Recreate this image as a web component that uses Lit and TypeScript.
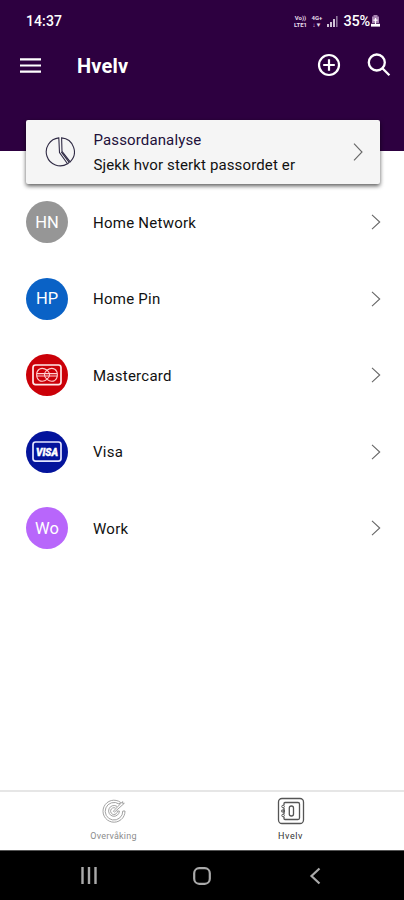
import { LitElement, html, css } from "lit";
import { customElement } from "lit/decorators.js";

const mastercard = html`<svg width="30" height="22" viewBox="0 0 30 22" fill="none" stroke="#fff">
  <rect x="1" y="1" width="28" height="19.6" rx="2.6" stroke-width="1.7" stroke="#ffe9e9"/>
  <g stroke-width="1.1" stroke="#ffd0d0">
    <path d="M15 6.2C12.5 4.3 9.5 4 7.2 5.2C3.8 7.5 3.8 14 7.2 16.4C9.5 17.6 12.5 17.3 15 15.4"/>
    <path d="M15 6.2C17.5 4.3 20.5 4 22.8 5.2C26.2 7.5 26.2 14 22.8 16.4C20.5 17.6 17.5 17.3 15 15.4"/>
    <path d="M15 6.2C11.6 9 11.6 12.6 15 15.4C18.4 12.6 18.4 9 15 6.2Z"/>
    <path d="M5 9.6H25 M5 12H25"/>
  </g>
</svg>`;

const visa = html`<svg width="30" height="22" viewBox="0 0 30 22" fill="none">
  <rect x="1" y="1" width="28" height="19.2" rx="2.6" stroke-width="1.7" stroke="#e4e6ff"/>
  <text class="visa" x="4" y="14.6" textLength="22" lengthAdjust="spacingAndGlyphs">VISA</text>
</svg>`;

const rows = [
  { name: "Home Network", color: "#969696", mark: "HN" },
  { name: "Home Pin", color: "#0a62c6", mark: "HP" },
  { name: "Mastercard", color: "#cb0008", mark: mastercard },
  { name: "Visa", color: "#04149c", mark: visa },
  { name: "Work", color: "#b866fb", mark: "Wo" },
];

@customElement("app-root")
export class AppRoot extends LitElement {
  static styles = css`
    :host { display: flex; flex-direction: column; width: 404px; height: 900px; background: #fff; font-family: Roboto, sans-serif; color: #111; overflow: hidden; }
    * { box-sizing: border-box; }
    svg { display: block; flex: none; }
    header { height: 151px; flex: none; background: #2d0040; color: #fff; }
    .status { height: 40px; display: flex; align-items: center; justify-content: space-between; padding: 1px 24px 0 26px; }
    .time { font-size: 14px; font-weight: 500; letter-spacing: .1px; }
    .indicators { display: flex; align-items: center; }
    .net { font-size: 6px; font-weight: 700; color: #e6dcea; display: flex; flex-direction: column; align-items: center; }
    .net span { line-height: 7px; white-space: nowrap; }
    .volte { width: 16px; }
    .data { width: 13px; margin-left: 2px; }
    .signal { margin: 1px 5px 0 4px; }
    .percent { font-size: 14.5px; line-height: 17px; font-weight: 500; letter-spacing: -0.2px; padding-top: 1px; }
    .battery { margin-left: 1px; }
    .toolbar { height: 50px; display: flex; align-items: center; padding: 0 13px 0 20px; }
    h1 { margin: 2px 0 0 36px; font-size: 20px; font-weight: 700; line-height: 24px; letter-spacing: 0.2px; flex: 1; }
    .search { margin-left: 26px; }
    .card { position: relative; flex: none; height: 64px; margin: -31px 24px 0 26px; padding: 0 17px 0 19px; display: flex; align-items: center; background: #f5f5f5; border-radius: 2px; box-shadow: 0 2px 4px rgba(0,0,0,.65); }
    .card-text { flex: 1; margin-left: 18.5px; padding-top: 1px; font-size: 15px; line-height: 25px; letter-spacing: .13px; }
    .card-title { color: #21103a; }
    .chev { color: #666; }
    .list { flex: 1; }
    .row { height: 76.5px; display: flex; align-items: center; padding: 0 23px 0 26px; }
    .avatar { width: 42px; height: 42px; border-radius: 50%; display: flex; align-items: center; justify-content: center; color: #fff; font-size: 16.5px; }
    .visa { font: italic 900 10.5px Roboto, sans-serif; fill: #fff; stroke: #fff; stroke-width: .4; }
    .name { flex: 1; margin-left: 25px; font-size: 15px; letter-spacing: .25px; padding-top: .5px; }
    .tabs { height: 60px; flex: none; display: flex; border-top: 2px solid #e6e6e6; padding: 0 25px; }
    .tab { flex: 1; display: flex; flex-direction: column; align-items: center; color: #333; font-size: 9px; padding-top: 5px; }
    .tab svg { color: #555; }
    .tab.off svg { color: #999; }
    .tab span { margin-top: 5px; line-height: 12px; letter-spacing: .6px; }
    .tab.off { color: #8c8c8c; }
    .tab.off span { letter-spacing: .2px; }
    .nav { height: 50px; flex: none; background: #000; border-top: 1px solid #555; display: flex; align-items: center; justify-content: space-between; padding: 0 83px 0 80px; color: #aaa; }
    .home { margin-right: 3px; }
  `;

  render() {
    return html`
      <header>
        <div class="status">
          <span class="time">14:37</span>
          <div class="indicators">
            <div class="net volte"><span>Vo))</span><span>LTE1</span></div>
            <div class="net data"><span>4G+</span><span>↓▼</span></div>
            <svg class="signal" width="11" height="11" viewBox="0 0 11 11"><path d="M0 8h2v3H0z M3 6h2v5H3z M6 3h2v8H6z" fill="#cfc2d6"/><path d="M9 0h1.6v11H9z" fill="#8d769a"/></svg>
            <span class="percent">35%</span>
            <svg class="battery" width="9" height="12" viewBox="0 0 9 12"><path d="M2.5 0h4v1.5H8V8H1V1.5h1.5z" fill="#a985b3"/><path d="M0 8.8h9v2.8H0z" fill="#fff"/><path d="M4.5 3v6M2.4 5.2h4.2" stroke="#fff" stroke-width="1.2"/></svg>
          </div>
        </div>
        <div class="toolbar">
          <svg width="21" height="15" viewBox="0 0 21 15"><path d="M0 1.3h21M0 7.5h21M0 13.7h21" stroke="#fff" stroke-width="2.2"/></svg>
          <h1>Hvelv</h1>
          <svg width="24" height="24" viewBox="0 0 24 24" fill="none" stroke="#fff" stroke-width="2.2"><circle cx="12" cy="12" r="10"/><path d="M12 6.2v11.6M6.2 12h11.6"/></svg>
          <svg class="search" width="24" height="24" viewBox="0 0 24 24" fill="none" stroke="#fff" stroke-width="2.3"><circle cx="9.8" cy="9.5" r="8"/><path d="M15.4 15.3L22.4 22.2"/></svg>
        </div>
      </header>
      <div class="card">
        <svg width="30" height="30" viewBox="0 0 30 30" fill="none" stroke="#302b45" stroke-width="1.1"><path d="M13.8.9A14 14 0 1 0 22.5 26.8L14.5 15.5Z"/><path d="M16.6.9A14 14 0 0 1 25.2 24.8L17 14.3Z"/><path d="M22.5 26.8l1.7-1.3-7.9-10.7"/></svg>
        <div class="card-text"><div class="card-title">Passordanalyse</div><div>Sjekk hvor sterkt passordet er</div></div>
        <svg class="chev" width="10" height="18" viewBox="0 0 10 18"><path d="M1 .7L9 9L1 17.3" fill="none" stroke="currentColor" stroke-width="1.1"/></svg>
      </div>
      <div class="list">
        ${rows.map(r => html`<div class="row"><div class="avatar" style="background:${r.color}">${r.mark}</div><span class="name">${r.name}</span><svg class="chev" width="10" height="16" viewBox="0 0 10 16"><path d="M1 .8L8.7 8L1 15.2" fill="none" stroke="currentColor" stroke-width="1.1"/></svg></div>`)}
      </div>
      <div class="tabs">
        <div class="tab off">
          <svg width="28" height="28" viewBox="0 0 28 28" fill="none" stroke="currentColor" stroke-width=".9"><path d="M20.6 5.4A11 11 0 1 0 25 14H22.8A8.8 8.8 0 1 1 19 7Z"/><path d="M17 9.4A5.4 5.4 0 1 0 19.4 14H17.4A3.4 3.4 0 1 1 15.4 11"/><path d="M13.4 14.2L22.6 4.6V6.3H24.3L14.4 15.2Z"/></svg>
          <span>Overvåking</span>
        </div>
        <div class="tab">
          <svg width="28" height="28" viewBox="0 0 28 28" fill="none" stroke="currentColor" stroke-width="1.3"><rect x="1.5" y="1.5" width="25" height="25" rx="3.5"/><path d="M7 8V6.5Q7 5.5 8 5.5H21Q22.5 5.5 22.5 7V21Q22.5 22.5 21 22.5H8Q7 22.5 7 21.5V20M7 11V17"/><g stroke-width="1"><circle cx="6.1" cy="9.5" r="1.3"/><circle cx="6.1" cy="18.5" r="1.3"/><path d="M4.8 13h2.6v2H4.8z"/></g><rect x="12.3" y="9" width="4.2" height="10" rx="2.1"/></svg>
          <span>Hvelv</span>
        </div>
      </div>
      <div class="nav">
        <svg width="18" height="17" viewBox="0 0 18 17"><path d="M2.5 0v17M9 0v17M15.5 0v17" stroke="currentColor" stroke-width="2.4"/></svg>
        <svg class="home" width="18" height="18" viewBox="0 0 18 18"><rect x="1.2" y="1.2" width="15.6" height="15.6" rx="5" fill="none" stroke="currentColor" stroke-width="2.2"/></svg>
        <svg width="12" height="18" viewBox="0 0 12 18"><path d="M10.5 1.5L2.5 9L10.5 16.5" fill="none" stroke="currentColor" stroke-width="2.2"/></svg>
      </div>`;
  }
}
